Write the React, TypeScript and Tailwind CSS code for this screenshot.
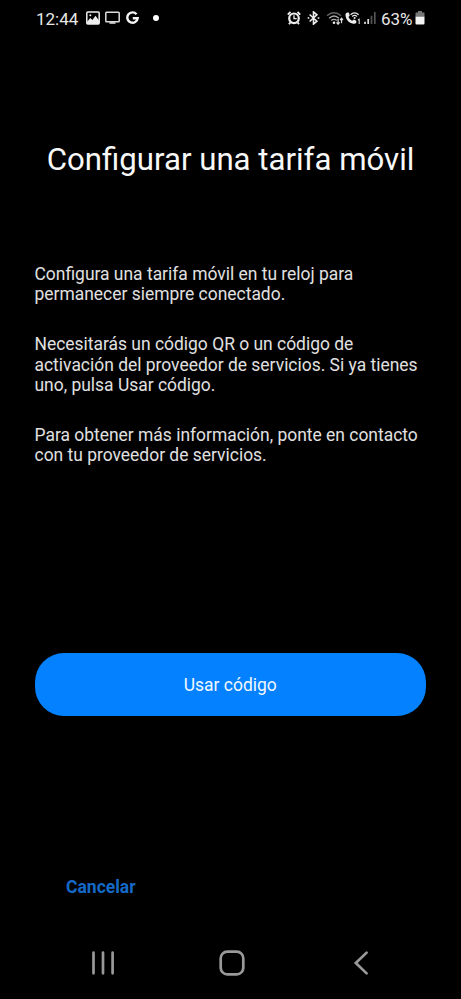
import React from "react";

function PictureIcon() {
  return (
    <svg className="ml-2 h-3.5 w-3.5" viewBox="0 0 14 14" aria-hidden="true">
      <rect x="0.8" y="1" width="12.4" height="12" rx="1" fill="none" stroke="#eee" strokeWidth="1.5" />
      <path d="M1 11 4.2 7l2.2 2L9.5 4.8 13 9.5V13H1Z" fill="#eee" />
      <circle cx="4.3" cy="4.3" r="1" fill="#eee" />
    </svg>
  );
}

function ScreenIcon() {
  return (
    <svg className="ml-[5px] h-3.5 w-[15px]" viewBox="0 0 15 14" aria-hidden="true">
      <rect x="0.8" y="1.3" width="13.4" height="9.5" rx="0.8" fill="none" stroke="#ddd" strokeWidth="1.5" />
      <path d="M4.5 12h6" stroke="#ddd" strokeWidth="1.6" />
    </svg>
  );
}

function GoogleIcon() {
  return (
    <svg className="ml-1.5 h-3.5 w-[13px]" viewBox="0 0 13 14" aria-hidden="true">
      <path d="M10.5 3.2A5.2 5.2 0 1 0 11.7 7.2H6.8" fill="none" stroke="#f4f4f4" strokeWidth="2.4" />
    </svg>
  );
}

function AlarmIcon() {
  return (
    <svg className="h-3.5 w-3.5" viewBox="0 0 14 14" aria-hidden="true">
      <path d="M.8 3.6 3.5 1M13.2 3.6 10.5 1M3.3 11.5 2 13.3M10.7 11.5l1.3 1.8" stroke="#eee" strokeWidth="1.9" />
      <circle cx="7" cy="7.3" r="4.8" fill="none" stroke="#eee" strokeWidth="2.2" />
      <path d="M7 4.2v3.4h2.7" fill="none" stroke="#eee" strokeWidth="1.3" />
    </svg>
  );
}

function BluetoothIcon() {
  return (
    <svg className="ml-1.5 h-3.5 w-[13px]" viewBox="0 0 13 14" aria-hidden="true">
      <path d="m2.6 3.5 7.3 6.7-3.4 2.9V.9l3.4 2.9-7.3 6.7" fill="none" stroke="#eee" strokeWidth="1.6" />
      <circle cx="1.5" cy="7" r="1" fill="#ccc" />
      <circle cx="11.5" cy="7" r="1" fill="#ccc" />
    </svg>
  );
}

function WifiIcon() {
  return (
    <svg className="ml-1.5 h-3.5 w-[18px]" viewBox="0 0 18 14" aria-hidden="true">
      <path d="M1 4.8c4.2-4 9.8-4 14 0" fill="none" stroke="#626262" strokeWidth="1.4" />
      <path d="M3.1 7.2c3-2.8 6.8-2.8 9.8 0M5.2 9.6c1.8-1.6 3.8-1.6 5.6 0" fill="none" stroke="#aaa" strokeWidth="1.4" />
      <circle cx="8" cy="11.7" r="1.3" fill="#eee" />
      <path d="M12.1 8v5.2m-1.6-1.9 1.6 1.9 1.5-1.9M15.5 12.2V7.3m-1.5 1.8 1.5-1.8L17 9.1" fill="none" stroke="#ddd" strokeWidth="1.2" />
    </svg>
  );
}

function CallIcon() {
  return (
    <svg className="ml-px h-3.5 w-4" viewBox="0 0 16 14" aria-hidden="true">
      <path d="M2.2 1.5 4 1.8l.7 3-1.2 1.1c.8 1.8 2 3 3.8 3.9l1.4-1.2 2.6 1.1v2c-.6 1-1.7 1.3-3 1C4 11.8 1 8.6.5 4.4.3 3 .9 1.9 2.2 1.5Z" fill="#eee" />
      <path d="M5.6 3.7c2.3-2.5 5.7-2.5 8 0M7.2 5.5c1.5-1.4 3.3-1.4 4.8 0" fill="none" stroke="#e5e5e5" strokeWidth="1.3" />
      <circle cx="9.6" cy="7.1" r="1" fill="#eee" />
      <path d="m12.9 9 1.3-.8V13" fill="none" stroke="#ddd" strokeWidth="1.1" />
    </svg>
  );
}

function SignalIcon() {
  return (
    <svg className="ml-[3px] h-3.5 w-3" viewBox="0 0 12 14" aria-hidden="true">
      <path d="M1 13v-2.3M4.2 13V8" stroke="#ddd" strokeWidth="1.7" />
      <path d="M7.5 13V4.8M10.8 13V1" stroke="#555" strokeWidth="1.7" />
    </svg>
  );
}

function BatteryIcon() {
  return (
    <svg className="ml-[3px] h-3.5 w-2.5" viewBox="0 0 10 14" aria-hidden="true">
      <path d="M3 0h4v1.5h2q.5 0 .5.5v3.5h-9V2q0-.5.5-.5h2Z" fill="#777" />
      <path d="M.5 5.5h9v7q0 1-1 1h-7q-1 0-1-1Z" fill="#f4f4f4" />
    </svg>
  );
}

function StatusBar() {
  return (
    <header className="flex h-9 items-center justify-between pr-9 pl-9 text-[17px] text-[#e8e8e8]">
      <div className="flex items-center">
        <span className="w-[42px] pt-px leading-5 whitespace-nowrap">12:44</span>
        <PictureIcon />
        <ScreenIcon />
        <GoogleIcon />
        <span className="ml-[14px] h-1.5 w-1.5 rounded-full bg-white" />
      </div>
      <div className="flex items-center">
        <AlarmIcon />
        <BluetoothIcon />
        <WifiIcon />
        <CallIcon />
        <SignalIcon />
        <span className="ml-[5px] w-[31px] pt-px leading-5 whitespace-nowrap">63%</span>
        <BatteryIcon />
      </div>
    </header>
  );
}

function NavigationBar() {
  return (
    <nav className="flex h-[72px] items-center pl-[88px] text-[#999]">
      <button aria-label="Recientes" className="flex h-8 w-[30px] items-center justify-center">
        <svg className="h-7 w-[30px]" viewBox="0 0 30 28" fill="none" stroke="currentColor" strokeWidth="2.7" strokeLinecap="round">
          <path d="M5.5 3.7v20.6M15 3.7v20.6M24.6 3.7v20.6" />
        </svg>
      </button>
      <button aria-label="Inicio" className="ml-[99px] flex h-8 w-[30px] items-center justify-center">
        <svg className="h-7 w-[30px]" viewBox="0 0 30 28" fill="none" stroke="currentColor" strokeWidth="2.7">
          <rect x="3.7" y="2.7" width="22.6" height="22.6" rx="6.5" />
        </svg>
      </button>
      <button aria-label="Atrás" className="ml-[99px] flex h-8 w-[30px] items-center justify-center">
        <svg className="h-7 w-[30px]" viewBox="0 0 30 28" fill="none" stroke="currentColor" strokeWidth="2.7" strokeLinecap="round">
          <path d="M20.6 3.6 9.8 14l10.8 10.4" />
        </svg>
      </button>
    </nav>
  );
}

export default function App() {
  return (
    <div className="flex h-[999px] w-[461px] flex-col overflow-hidden bg-black font-['Roboto',sans-serif]">
      <StatusBar />
      <main className="flex flex-1 flex-col">
        <h1 className="mt-[104px] text-center text-[31.2px] leading-10 font-normal whitespace-nowrap text-[#f8f8f8]">
          Configurar una tarifa móvil
        </h1>
        <div className="mt-[84px] flex h-[203px] flex-col gap-[29.4px] pl-[34.5px] text-[17.44px] leading-[20.4px] whitespace-nowrap text-[#e0e0e0]">
          <p>
            Configura una tarifa móvil en tu reloj para
            <br />
            permanecer siempre conectado.
          </p>
          <p>
            Necesitarás un código QR o un código de
            <br />
            activación del proveedor de servicios. Si ya tienes
            <br />
            uno, pulsa Usar código.
          </p>
          <p>
            Para obtener más información, ponte en contacto
            <br />
            con tu proveedor de servicios.
          </p>
        </div>
        <button className="mt-[186px] ml-[34.5px] h-[63px] w-[391.5px] rounded-[29px] bg-[#0381fe] pt-0.5 text-[17.44px] text-[#f2f8ff]">
          Usar código
        </button>
        <button className="mt-[161px] ml-[66px] h-5 self-start text-[17.5px] leading-5 font-bold text-[#1569c7]">
          Cancelar
        </button>
      </main>
      <NavigationBar />
    </div>
  );
}
